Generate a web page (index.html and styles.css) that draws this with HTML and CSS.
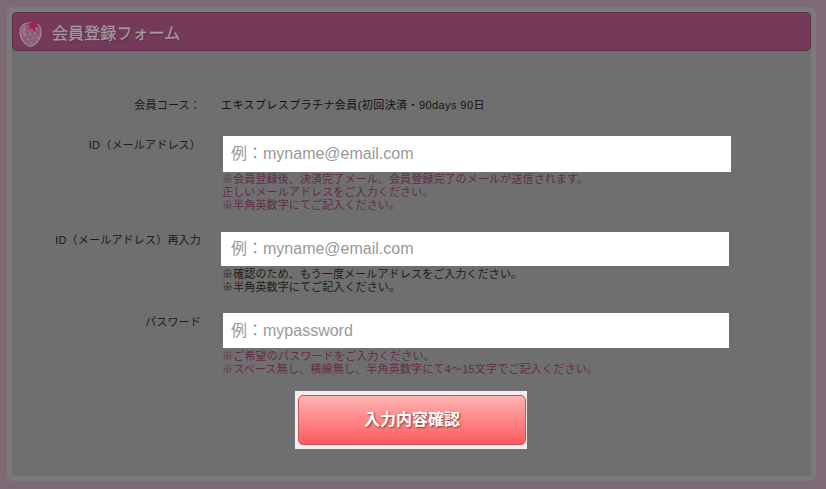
FILE: index.html
```html
<!DOCTYPE html>
<html lang="ja">
<head>
    <meta charset="UTF-8">
    <meta name="viewport" content="width=device-width, initial-scale=1.0">
    <title>会員登録フォーム</title>
    <link rel="stylesheet" href="styles.css">
</head>
<body>
    <div class="panel">
        <h1 class="panel-title">
            <svg class="berry" width="23" height="28" viewBox="0 0 23 28">
                <path d="M9 4C4 4 1 8 1 13c0 6 4 12 9 14 2 .6 4 0 6-2 4-3 6-8 6-12 0-4-2-8-6-9-2-.5-5 0-7 0z" fill="#8b5d76" stroke="#ab8a9c" stroke-width="1.2"/>
                <path d="M3 12c0-3 2-5 4-6-1 3-1 8 0 12-2-1-4-3-4-6z" fill="#9c7389"/>
                <path d="M8 5l4-1 2-3 1 3 4-2-1 4 3 2-5 0 0 5-3-4-3 1 1-3z" fill="#a0204f"/>
                <g fill="#b592a5">
                    <circle cx="6" cy="16" r=".8"/><circle cx="11" cy="15" r=".8"/><circle cx="16" cy="14" r=".8"/>
                    <circle cx="9" cy="20" r=".8"/><circle cx="14" cy="19" r=".8"/><circle cx="18" cy="18" r=".8"/><circle cx="12" cy="24" r=".8"/>
                </g>
            </svg>
            <span>会員登録フォーム</span>
        </h1>

        <form class="form">
            <div class="row row-course">
                <div class="label">会員コース：</div>
                <div class="field course">エキスプレスプラチナ会員(初回決済・90days 90日</div>
            </div>

            <div class="row row-id">
                <div class="label">ID（メールアドレス）</div>
                <div class="field">
                    <input class="input-id" type="text" placeholder="例：myname@email.com">
                    <p class="note alert">※会員登録後、決済完了メール、会員登録完了のメールが送信されます。<br>正しいメールアドレスをご入力ください。<br>※半角英数字にてご記入ください。</p>
                </div>
            </div>

            <div class="row row-again">
                <div class="label">ID（メールアドレス）再入力</div>
                <div class="field">
                    <input class="input-again" type="text" placeholder="例：myname@email.com">
                    <p class="note">※確認のため、もう一度メールアドレスをご入力ください。<br>※半角英数字にてご記入ください。</p>
                </div>
            </div>

            <div class="row row-pass">
                <div class="label">パスワード</div>
                <div class="field">
                    <input class="input-pass" type="text" placeholder="例：mypassword">
                    <p class="note alert">※ご希望のパスワードをご入力ください。<br>※スペース無し、横線無し、半角英数字にて4～15文字でご記入ください。</p>
                </div>
            </div>

            <div class="submit-wrap">
                <button class="submit" type="button">入力内容確認</button>
            </div>
        </form>
    </div>
</body>
</html>
```

FILE: styles.css
```css
* {
    margin: 0;
    padding: 0;
    box-sizing: border-box;
}

body {
    font-family: "Liberation Sans", "Noto Sans CJK JP", sans-serif;
    background: #7d6a74;
    height: 489px;
    overflow: hidden;
    padding: 7px 10px 8px 7px;
    color: #111;
}

.panel {
    height: 474px;
    background: #6f6f6f;
    border: 5px solid #7a7a7a;
    border-radius: 6px;
}

.panel-title {
    display: flex;
    align-items: center;
    gap: 10px;
    height: 39px;
    padding-left: 6px;
    background: #753a5a;
    border: 1px solid #5f2c48;
    border-radius: 5px;
    font-size: 16px;
    font-weight: normal;
    color: #a39aa0;
    text-shadow: 1px 1px 1px #4e2a3e;
}

.panel-title span {
    letter-spacing: 0.1px;
    -webkit-text-stroke: 0.3px #a39aa0;
}

.berry {
    flex: none;
    margin-top: 3px;
}

.row {
    display: flex;
}

.row-course {
    padding-top: 47px;
    height: 85px;
}

.row-id {
    height: 95px;
}

.row-again {
    height: 82px;
}

.row-pass {
    height: 78px;
}

.label {
    width: 189px;
    padding-top: 1px;
    text-align: right;
    font-size: 11px;
    line-height: 13px;
    letter-spacing: 0.2px;
    color: #1a1a1a;
}

.row-id .label,
.row-again .label,
.row-pass .label {
    padding-top: 3px;
}

.field {
    margin-left: 20px;
}

.course {
    padding-top: 1px;
    font-size: 11px;
    line-height: 13px;
    letter-spacing: 0.42px;
}

input {
    display: block;
    height: 36px;
    padding: 0 9px;
    border: none;
    background: #fff;
    font-family: "Liberation Sans", "Noto Sans CJK JP", sans-serif;
    font-size: 16px;
}

input::placeholder {
    color: #999;
    opacity: 1;
}

.input-id {
    width: 508px;
    margin-left: 2px;
    padding-left: 8px;
}

.input-again {
    width: 508px;
    height: 34px;
    margin-top: 1px;
    padding-left: 10px;
}

.input-pass {
    width: 506px;
    height: 35px;
    margin-left: 2px;
    padding-left: 8px;
}

.note {
    margin-left: 1px;
    padding-top: 1px;
    font-size: 11px;
    line-height: 13px;
    letter-spacing: 0.13px;
    color: #1c1c1c;
}

.input-again + .note {
    padding-top: 2px;
}

.input-pass + .note {
    padding-top: 2px;
    letter-spacing: 0.2px;
}

.alert {
    color: #642c49;
}

.submit-wrap {
    display: flex;
    justify-content: center;
    width: 232px;
    height: 58px;
    margin-left: 283px;
    padding: 4px 1px 4px 3px;
    background: #f4eeee;
}

.submit {
    width: 100%;
    padding-bottom: 5px;
    border: 1px solid #c4545c;
    border-radius: 5px;
    background: linear-gradient(#ffb3b3, #ff5a5e);
    font-family: "Liberation Sans", "Noto Sans CJK JP", sans-serif;
    font-size: 16px;
    font-weight: bold;
    color: #fff;
    text-shadow: 1px 1px 2px #7a4038;
}
```
